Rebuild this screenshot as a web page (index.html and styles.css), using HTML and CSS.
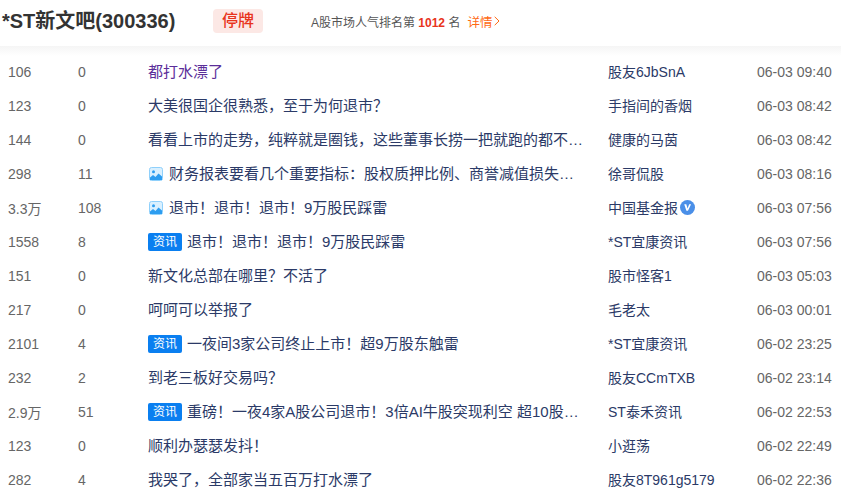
FILE: index.html
```html
<!DOCTYPE html>
<html lang="zh">
<head>
<meta charset="utf-8">
<title>*ST新文吧(300336)</title>
<link rel="stylesheet" href="styles.css">
</head>
<body>
<header class="head">
  <h1 class="name">*ST新文吧(300336)</h1>
  <span class="halt">停牌</span>
  <span class="rank">A股市场人气排名第 <b>1012</b> 名</span>
  <a class="more">详情<svg class="chev" width="6" height="10" viewBox="0 0 6 10"><path d="M.7.8 5 5 .7 9.2" fill="none" stroke="#ff6a13" stroke-width="1"/></svg></a>
</header>
<main class="list">
  <div class="row"><span class="read">106</span><span class="rep">0</span><span class="title"><a class="t visited">都打水漂了</a></span><a class="author">股友6JbSnA</a><span class="time">06-03 09:40</span></div>
  <div class="row"><span class="read">123</span><span class="rep">0</span><span class="title"><a class="t">大美很国企很熟悉，至于为何退市？</a></span><a class="author">手指间的香烟</a><span class="time">06-03 08:42</span></div>
  <div class="row"><span class="read">144</span><span class="rep">0</span><span class="title"><a class="t">看看上市的走势，纯粹就是圈钱，这些董事长捞一把就跑的都不是好东西</a></span><a class="author">健康的马茵</a><span class="time">06-03 08:42</span></div>
  <div class="row"><span class="read">298</span><span class="rep">11</span><span class="title"><svg class="pic" viewBox="0 0 14 14"><rect x=".5" y=".5" width="13" height="13" rx="2" fill="#d9f0ff" stroke="#8fd0fb"/><circle cx="4.500" cy="4.700" r="1.500" fill="#2d9df0"/><path d="M1 13v-2.500l3-2.500 2.500 2 3-3.500 3.500 3V13z" fill="#2d9df0"/></svg><a class="t">财务报表要看几个重要指标：股权质押比例、商誉减值损失和应收账款</a></span><a class="author">徐哥侃股</a><span class="time">06-03 08:16</span></div>
  <div class="row"><span class="read">3.3万</span><span class="rep">108</span><span class="title"><svg class="pic" viewBox="0 0 14 14"><rect x=".5" y=".5" width="13" height="13" rx="2" fill="#d9f0ff" stroke="#8fd0fb"/><circle cx="4.500" cy="4.700" r="1.500" fill="#2d9df0"/><path d="M1 13v-2.500l3-2.500 2.500 2 3-3.500 3.500 3V13z" fill="#2d9df0"/></svg><a class="t">退市！退市！退市！9万股民踩雷</a></span><a class="author">中国基金报<svg class="vip" viewBox="0 0 16 16"><circle cx="8" cy="8" r="8" fill="#4a8fe8"/><path d="M4.500 4.500 6.800 11.500h1.700L11.800 4.500H9.800L8 9 6.700 4.500z" fill="#fff"/></svg></a><span class="time">06-03 07:56</span></div>
  <div class="row"><span class="read">1558</span><span class="rep">8</span><span class="title"><span class="tag">资讯</span><a class="t">退市！退市！退市！9万股民踩雷</a></span><a class="author">*ST宜康资讯</a><span class="time">06-03 07:56</span></div>
  <div class="row"><span class="read">151</span><span class="rep">0</span><span class="title"><a class="t">新文化总部在哪里？不活了</a></span><a class="author">股市怪客1</a><span class="time">06-03 05:03</span></div>
  <div class="row"><span class="read">217</span><span class="rep">0</span><span class="title"><a class="t">呵呵可以举报了</a></span><a class="author">毛老太</a><span class="time">06-03 00:01</span></div>
  <div class="row"><span class="read">2101</span><span class="rep">4</span><span class="title"><span class="tag">资讯</span><a class="t">一夜间3家公司终止上市！超9万股东触雷</a></span><a class="author">*ST宜康资讯</a><span class="time">06-02 23:25</span></div>
  <div class="row"><span class="read">232</span><span class="rep">2</span><span class="title"><a class="t">到老三板好交易吗？</a></span><a class="author">股友CCmTXB</a><span class="time">06-02 23:14</span></div>
  <div class="row"><span class="read">2.9万</span><span class="rep">51</span><span class="title"><span class="tag">资讯</span><a class="t">重磅！一夜4家A股公司退市！3倍AI牛股突现利空 超10股年报被出具无法表示意见</a></span><a class="author">ST泰禾资讯</a><span class="time">06-02 22:53</span></div>
  <div class="row"><span class="read">123</span><span class="rep">0</span><span class="title"><a class="t">顺利办瑟瑟发抖！</a></span><a class="author">小逛荡</a><span class="time">06-02 22:49</span></div>
  <div class="row"><span class="read">282</span><span class="rep">4</span><span class="title"><a class="t">我哭了，全部家当五百万打水漂了</a></span><a class="author">股友8T961g5179</a><span class="time">06-02 22:36</span></div>
</main>
</body>
</html>
```
FILE: styles.css
```css
* { box-sizing: border-box; }
html, body { margin: 0; padding: 0; height: 499px; overflow: hidden; background: #fff; }
body { font-family: Arial, "Liberation Sans", "Noto Sans CJK SC", sans-serif; font-size: 14px; color: #666; }
.head { display: flex; align-items: center; height: 46px; padding: 0 0 4px 2px; }
.name { margin: 0; font-size: 20px; font-weight: 700; color: #333; line-height: 34px; width: 211px; flex: none; }
.halt { display: block; width: 50px; height: 24px; line-height: 23px; text-align: center; font-size: 16px; font-weight: 500; color: #e8341c; background: #fce8e5; border-radius: 4px; }
.rank { margin-left: 48px; font-size: 12px; color: #555; }
.rank b { color: #e8341c; }
.more { display: inline-flex; align-items: center; gap: 2px; margin-left: 7px; font-size: 12.500px; color: #ff6a13; }
.list { display: block; padding-top: 9px; background: linear-gradient(#f5f5f5, #fff 10px); }
.row { display: flex; align-items: center; height: 34px; }
.read { width: 78px; padding-left: 8px; flex: none; color: #666; }
.rep { width: 70px; flex: none; color: #666; }
.title { width: 460px; flex: none; padding-right: 24px; display: flex; align-items: center; }
.t { color: #2b3a67; font-size: 15px; line-height: 20px; margin-top: -1px; white-space: nowrap; overflow: hidden; text-overflow: ellipsis; min-width: 0; }
.t.visited { color: #5b2e99; }
.pic { width: 14px; height: 14px; margin: 0 6px 0 1px; flex: none; }
.tag { flex: none; width: 34px; height: 18px; line-height: 18px; margin: 0 5px 0 0; text-align: center; font-size: 12px; color: #fff; background: #0a7ff0; border-radius: 2px; }
.author { width: 149px; flex: none; display: flex; align-items: center; margin-top: -2px; color: #2b3a67; }
.vip { width: 15px; height: 15px; margin-left: 2px; }
.time { flex: none; color: #666; }
```
